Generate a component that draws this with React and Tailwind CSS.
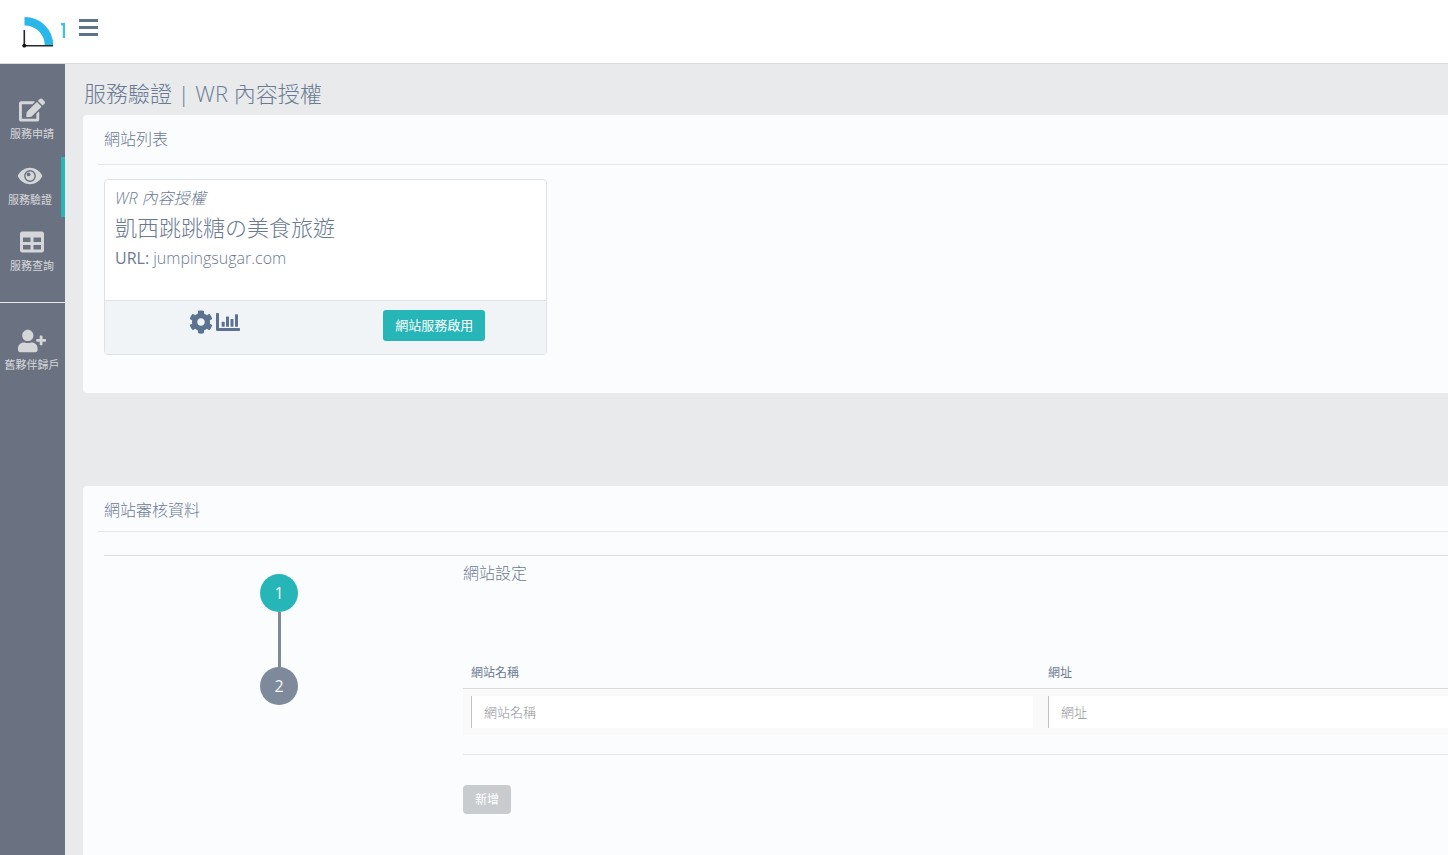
import { FaEdit, FaTable, FaUserPlus, FaCog } from "react-icons/fa";

const NAV = [
  { label: "服務申請", Icon: FaEdit, size: "size-[26px] -my-px" },
  { label: "服務驗證", Icon: EyeIcon, size: "size-[26px] -my-px", active: true },
  { label: "服務查詢", Icon: FaTable, size: "size-6" },
];

function EyeIcon({ className }) {
  return (
    <svg viewBox="0 0 26 26" className={className} aria-hidden="true">
      <path
        d="M.600 13C3.200 7.800 7.800 4.800 13 4.800S22.800 7.800 25.400 13C22.800 18.200 18.200 21.200 13 21.200S3.200 18.200.600 13Z"
        fill="currentColor"
      />
      <circle cx="13" cy="13" r="5.200" fill="none" stroke="#6a7180" strokeWidth="1.400" />
      <path
        d="M13 9.600A3.400 3.400 0 1 1 9.600 13A2 2 0 0 0 13 9.600Z"
        fill="currentColor"
      />
      <circle cx="11.600" cy="11.400" r="1.900" fill="#6a7180" />
    </svg>
  );
}

function ChartIcon({ className }) {
  return (
    <svg viewBox="0 0 24 24" className={className} fill="currentColor" aria-hidden="true">
      <path d="M.700 3H2.300Q3 3 3 3.700V18H23.300Q24 18 24 18.700V20.300Q24 21 23.300 21H1.200Q0 21 0 19.800V3.700Q0 3 .700 3Z" />
      <rect x="5.700" y="11.700" width="3" height="5" rx=".500" />
      <rect x="10" y="6.600" width="3" height="10.100" rx=".500" />
      <rect x="14.500" y="9" width="3" height="7.700" rx=".500" />
      <rect x="19" y="4.300" width="3" height="12.400" rx=".500" />
    </svg>
  );
}

function Logo() {
  return (
    <svg viewBox="0 0 46 36" className="h-9 w-[46px]" role="img" aria-label="Logo">
      <path d="M4.500 7.300C18 7.300 29 18 29 31.500" fill="none" stroke="#29b6e8" strokeWidth="8.500" />
      <path d="M4.300 16V31.700M2.500 31.700H33" fill="none" stroke="#26282b" strokeWidth="1.600" />
      <circle cx="4.300" cy="31.700" r="1.900" fill="#111" />
      <path d="M41 10.200H44V24" fill="none" stroke="#3fc0ea" strokeWidth="2.400" />
    </svg>
  );
}

function NavItem({ label, Icon, size, active }) {
  return (
    <a
      href="#"
      aria-current={active ? "page" : undefined}
      className={`flex h-[60px] flex-col items-center gap-1 whitespace-nowrap pr-px pt-[7px] text-[11px] font-normal leading-4 text-[#d6d8db] ${
        active ? "border-r-4 border-[#27b6b8]" : ""
      }`}
    >
      <Icon className={`${size} shrink-0 text-[#d5d6d8]`} />
      {label}
    </a>
  );
}

function Panel({ title, className, titleClass, children }) {
  return (
    <section className={`rounded-l bg-[#fbfcfe] pl-[15px] ${className}`}>
      <h2 className={`border-b border-[#e4e6e8] pl-[6px] pt-3 text-base leading-6 ${titleClass}`}>
        {title}
      </h2>
      <div className="pl-[6px]">{children}</div>
    </section>
  );
}

function Step({ n, active }) {
  return (
    <li
      className={`flex size-[38px] items-center justify-center rounded-full font-normal text-[#f4f8fa] ${
        active ? "bg-[#27b6b8]" : "bg-[#7f899c]"
      }`}
    >
      {n}
    </li>
  );
}

function Cell({ id, label }) {
  return (
    <td className="py-[7px] pl-2 pr-[7px] last:pr-0">
      <input
        id={id}
        type="text"
        placeholder={label}
        className="block h-8 w-full border-l border-[#bfc3c7] bg-white px-3 text-[13px] outline-none placeholder:text-[#8f9195]"
      />
    </td>
  );
}

export default function App() {
  return (
    <div className="flex min-h-screen flex-col bg-[#e8eaec] font-['Open_Sans','Noto_Sans_CJK_TC',sans-serif] font-light text-[#6b7a92]">
      <header className="flex h-16 items-start border-b border-[#d9dbdd] bg-white">
        <a href="#" className="w-[65px] shrink-0 overflow-hidden pl-5 pt-[14px]">
          <Logo />
        </a>
        <button type="button" aria-label="Menu" className="ml-[14px] mt-[19px]">
          <svg viewBox="0 0 19 17" className="h-[17px] w-[19px]" fill="#5f728a">
            <rect width="19" height="3" />
            <rect y="7" width="19" height="3" />
            <rect y="14" width="19" height="3" />
          </svg>
        </button>
      </header>

      <div className="flex flex-1">
        <nav className="w-[65px] shrink-0 bg-[#6a7180] pt-[27px]">
          <div className="flex flex-col gap-[6px] pb-[19px]">
            {NAV.map((item) => (
              <NavItem key={item.label} {...item} />
            ))}
          </div>
          <div className="border-t border-[#e6e8ea] pt-[19px]">
            <NavItem label="舊夥伴歸戶" Icon={FaUserPlus} size="size-7 -my-[2px]" />
          </div>
        </nav>

        <main className="min-w-0 flex-1 overflow-hidden pl-[18px] pt-[11px]">
          <h1 className="pb-1 pl-px text-[22px] leading-9">服務驗證 | WR 內容授權</h1>

          <Panel title="網站列表" className="pb-[38px]" titleClass="pb-[13px]">
            <article className="mt-[14px] w-[443px] rounded border border-[#dfe2e5] bg-white">
              <div className="h-[120px] px-[10px] pt-[6px]">
                <p className="text-base italic leading-6">WR 內容授權</p>
                <h3 className="pb-[2px] text-[22px] leading-[34px]">凱西跳跳糖の美食旅遊</h3>
                <p className="text-base leading-6">
                  <span className="font-normal">URL:</span> jumpingsugar.com
                </p>
              </div>
              <div className="grid grid-cols-2 border-t border-[#dfe2e5] bg-[#f0f4f7] pb-[13px] pr-[2px] pt-[9px]">
                <div className="flex justify-center gap-[3px] text-[#5b7390]">
                  <button type="button" aria-label="設定" className="self-start">
                    <FaCog className="size-6" />
                  </button>
                  <button type="button" aria-label="統計" className="self-start">
                    <ChartIcon className="size-6" />
                  </button>
                </div>
                <button
                  type="button"
                  className="h-[31px] justify-self-center rounded-[3px] bg-[#27b6b8] px-3 text-[13px] font-normal text-white"
                >
                  網站服務啟用
                </button>
              </div>
            </article>
          </Panel>

          <Panel title="網站審核資料" className="mt-[93px] pb-[60px]" titleClass="pb-[9px]">
            <div className="mt-[23px] flex border-t border-[#d9dcdf]">
              <ol className="flex w-[350px] shrink-0 flex-col items-center pt-[18px] text-base">
                <Step n={1} active />
                <li aria-hidden="true" className="h-[55px] w-[3px] bg-[#7f899c]" />
                <Step n={2} />
              </ol>
              <div className="ml-[9px] min-w-0 flex-1">
                <h3 className="pt-[5px] text-base leading-6">網站設定</h3>
                <table className="mt-20 w-full table-fixed border-collapse">
                  <thead>
                    <tr className="border-b border-[#d9dcdf] text-left text-xs leading-4">
                      <th className="w-[577px] px-2 pb-[7px] font-normal">
                        <label htmlFor="site-name">網站名稱</label>
                      </th>
                      <th className="px-2 pb-[7px] font-normal">
                        <label htmlFor="site-url">網址</label>
                      </th>
                    </tr>
                  </thead>
                  <tbody>
                    <tr className="bg-[#f9f9f9]">
                      <Cell id="site-name" label="網站名稱" />
                      <Cell id="site-url" label="網址" />
                    </tr>
                  </tbody>
                </table>
                <hr className="mb-[30px] mt-[19px] border-[#e2e5e8]" />
                <button
                  type="button"
                  disabled
                  className="h-[29px] rounded-sm bg-[#c8cccf] px-3 text-xs font-normal text-white"
                >
                  新增
                </button>
              </div>
            </div>
          </Panel>
        </main>
      </div>
    </div>
  );
}
